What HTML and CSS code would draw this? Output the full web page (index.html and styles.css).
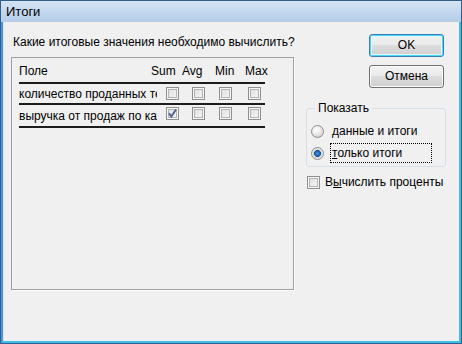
FILE: index.html
```html
<!DOCTYPE html>
<html lang="ru">
<head>
<meta charset="utf-8">
<title>Итоги</title>
<link rel="stylesheet" href="styles.css">
</head>
<body>
<div class="window">
  <div class="titlebar">Итоги</div>
  <div class="frame">
    <div class="client">
      <div class="left">
        <div class="question">Какие итоговые значения необходимо вычислить?</div>
        <div class="panel">
          <div class="head">
            <span>Поле</span><span>Sum</span><span>Avg</span><span>Min</span><span>Max</span>
          </div>
          <div class="row r1">
            <span class="field">количество проданных телевизоров</span>
            <span class="cb"></span><span class="cb"></span><span class="cb"></span><span class="cb"></span>
          </div>
          <div class="row r2">
            <span class="field">выручка от продаж по каждому</span>
            <span class="cb checked"><svg width="11" height="11" viewBox="0 0 11 11"><path d="M2 5.2 L4.3 8.6 L9 1.6" fill="none" stroke="#4b5f93" stroke-width="1.8"/></svg></span><span class="cb"></span><span class="cb"></span><span class="cb"></span>
          </div>
        </div>
      </div>
      <div class="right">
        <div class="btn default">OK</div>
        <div class="btn">Отмена</div>
        <fieldset class="group">
          <legend>Показать</legend>
          <div class="opt"><span class="radio"></span><span class="lbl"><u>д</u>анные и итоги</span></div>
          <div class="opt"><span class="radio on"></span><span class="lbl focus"><u>т</u>олько итоги</span></div>
        </fieldset>
        <div class="check"><span class="cb"></span><span>В<u>ы</u>числить проценты</span></div>
      </div>
    </div>
  </div>
</div>
</body>
</html>
```

FILE: styles.css
```css
* { box-sizing: border-box; }
html, body { margin: 0; padding: 0; }
body {
  font-family: "Liberation Sans", Arial, sans-serif;
  font-size: 12px;
  color: #000;
}
.window {
  width: 462px;
  height: 344px;
  border: 1px solid #2f5f8c;
  display: flex;
  flex-direction: column;
  background: #b9d1ea;
}
.titlebar {
  height: 21px;
  flex: none;
  padding-left: 5px;
  line-height: 22px;
  font-size: 13px;
  color: #000;
  background: linear-gradient(to bottom, #d6e4f3 0%, #c4d8ee 50%, #b3cce7 100%);
}
.frame {
  flex: 1;
  display: flex;
  border-left: 2px solid #4f93d2;
  border-right: 2px solid #3dbfe9;
  border-bottom: 2px solid #3dbfe9;
}
.client {
  flex: 1;
  display: flex;
  gap: 12px;
  background: #f0f0f0;
  border-left: 1px solid #dce6ef;
  padding: 0 0 0 7px;
}
.left { width: 283px; display: flex; flex-direction: column; }
.question {
  margin: 13px 0 0 2px;
  line-height: 14px;
  white-space: nowrap;
}
.panel {
  margin-top: 8px;
  height: 233px;
  border: 1px solid #a0a0a0;
  box-shadow: 1px 1px 0 #ffffff;
  padding: 0 0 0 7px;
}
.head {
  display: grid;
  grid-template-columns: 132px 31px 33px 30px 21px;
  width: 246px;
  padding: 6px 0 4px;
  line-height: 14px;
  border-bottom: 2px solid #1c1c1c;
}
.row {
  display: grid;
  grid-template-columns: 147px 26px 27px 29px 13px;
  align-items: center;
  width: 246px;
  border-bottom: 2px solid #1c1c1c;
}
.r1 { height: 21px; }
.r2 { height: 23px; }
.r2 .cb { margin-bottom: 4px; }
.field {
  width: 138px;
  overflow: hidden;
  white-space: nowrap;
  line-height: 14px;
}
.cb {
  width: 13px;
  height: 13px;
  border: 1px solid #8f8f8f;
  box-shadow: inset 0 0 0 1px #f6f6f6, inset 0 0 0 2px #b4b4b4;
  background-image: linear-gradient(135deg, #dcdcdc, #f8f8f8);
  display: flex;
  align-items: center;
  justify-content: center;
}
.cb.checked svg { display: block; }
.right { width: 140px; display: flex; flex-direction: column; }
.btn {
  margin-left: 63px;
  width: 75px;
  height: 23px;
  border: 1px solid #707070;
  border-radius: 3px;
  background: linear-gradient(to bottom, #f2f2f2 0%, #ebebeb 45%, #dddddd 50%, #cfcfcf 100%);
  box-shadow: inset 0 0 0 1px #fcfcfc;
  text-align: center;
  line-height: 21px;
  margin-top: 8px;
}
.btn.default {
  margin-top: 12px;
  border-color: #3c7fb1;
  box-shadow: inset 0 0 0 1px #48d8fb, inset 0 0 0 2px #e6f6fc;
}
.group {
  margin: 13px 0 0 0;
  padding: 6px 0 3px 4px;
  border: 1px solid #d5dfe5;
  border-radius: 3px;
  min-width: 0;
}
.group legend {
  margin-left: 4px;
  padding: 0 3px;
  line-height: 14px;
}
.opt {
  display: flex;
  align-items: center;
  height: 20px;
}
.opt + .opt { margin-top: 2px; }
.radio {
  width: 13px;
  height: 13px;
  border-radius: 50%;
  border: 1px solid #8e8f8f;
  background: radial-gradient(circle at 40% 35%, #ffffff 0%, #ececec 40%, #c4c4c4 100%);
  margin-right: 6px;
  flex: none;
}
.radio.on {
  background: radial-gradient(circle at 50% 50%, #3e9de0 0%, #1a63b0 32%, #0f4c8f 40%, #d8d8d8 48%, #f4f4f4 100%);
}
.lbl {
  border: 1px dotted transparent;
  padding: 0 1px;
  height: 20px;
  line-height: 18px;
  white-space: nowrap;
}
.lbl.focus {
  border-color: #000;
  width: 102px;
}
.check {
  display: flex;
  align-items: center;
  gap: 5px;
  margin: 8px 0 0 1px;
  line-height: 14px;
}
```
